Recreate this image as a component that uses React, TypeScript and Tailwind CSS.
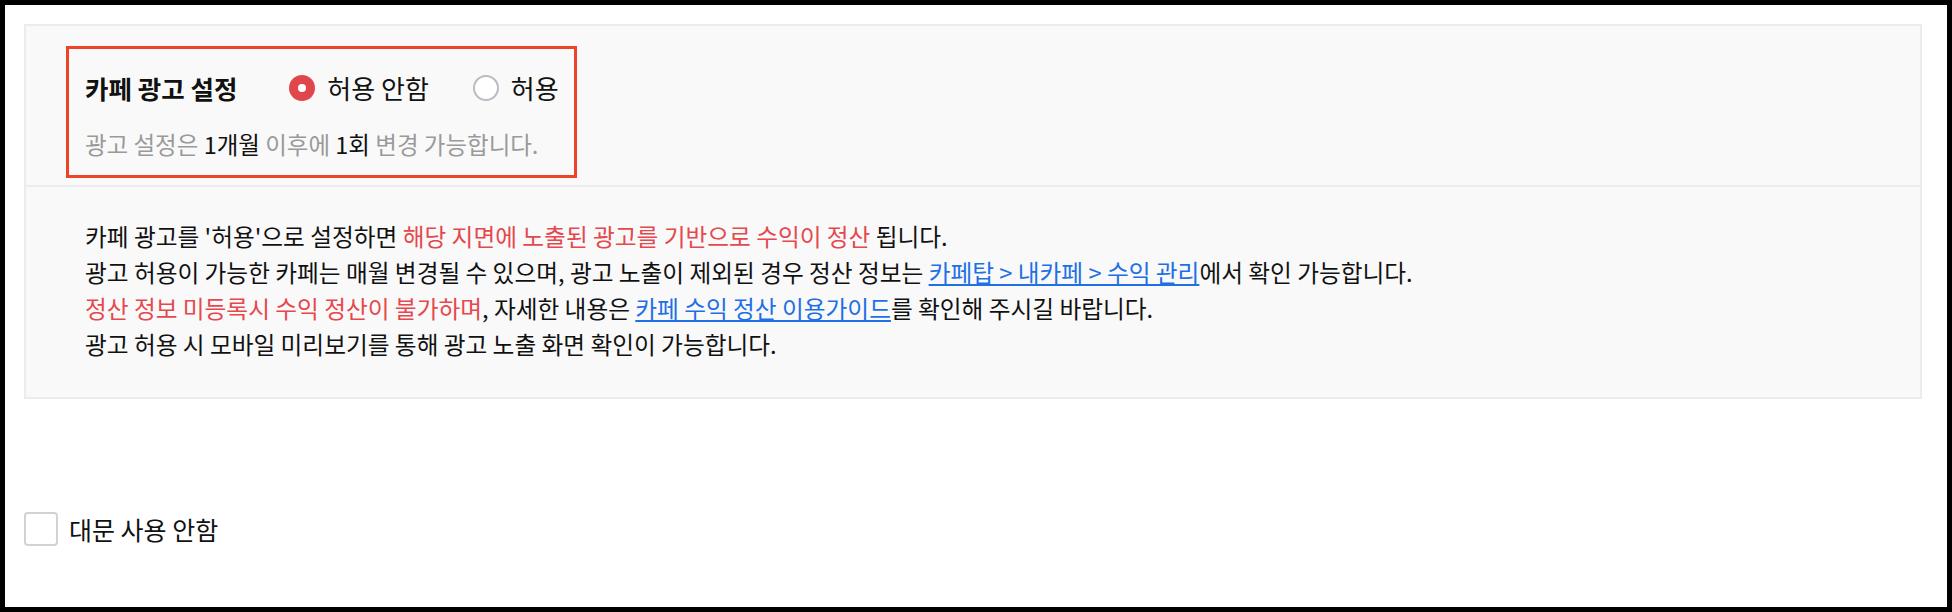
import { useState } from "react";

const font = { fontFamily: '"Noto Sans CJK KR", "Noto Sans", sans-serif' };

function Radio({ checked, label, onClick }: { checked: boolean; label: string; onClick: () => void }) {
  return (
    <button type="button" onClick={onClick} className="flex items-center gap-3">
      {checked ? (
        <span className="flex h-[26px] w-[26px] items-center justify-center rounded-full bg-[#e0474d]">
          <span className="h-[8px] w-[8px] rounded-full bg-white" />
        </span>
      ) : (
        <span className="h-[26px] w-[26px] rounded-full border-2 border-[#b9bcc2] bg-white" />
      )}
      <span className="text-[26px] leading-[34px] text-[#111]">{label}</span>
    </button>
  );
}

export default function App() {
  const [allow, setAllow] = useState(false);
  const [noMain, setNoMain] = useState(false);

  return (
    <div className="h-[612px] border-[5px] border-black bg-white" style={font}>
      <div className="ml-[19px] mt-[19px] w-[1898px] border-2 border-[#ececec] bg-[#f9f9f9]">
        {/* ad setting row */}
        <div className="pl-[40px] pt-[20px] pb-[7px]">
          <div className="inline-flex flex-col border-[3px] border-[#ec4427] pl-[16px] pr-[15px] pt-[22px] pb-[16px]">
            <div className="flex h-[34px] items-center">
              <h3 className="text-[25.5px] font-bold leading-[34px] text-[#111]">카페 광고 설정</h3>
              <div className="ml-[52px] flex items-center gap-[44px]">
                <Radio checked={!allow} label="허용 안함" onClick={() => setAllow(false)} />
                <Radio checked={allow} label="허용" onClick={() => setAllow(true)} />
              </div>
            </div>
            <p className="mt-[24px] text-[23.5px] leading-[30px] text-[#9a9a9a]">
              광고 설정은 <span className="text-[#111]">1개월</span> 이후에{" "}
              <span className="text-[#111]">1회</span> 변경 가능합니다.
            </p>
          </div>
        </div>

        {/* notice */}
        <div className="border-t-2 border-[#ececec] pl-[59px] pt-[31px] pb-[35px] text-[23.7px] leading-[36px] text-[#111]">
          <p>
            카페 광고를 '허용'으로 설정하면{" "}
            <span className="text-[#e5484d]">해당 지면에 노출된 광고를 기반으로 수익이 정산</span> 됩니다.
          </p>
          <p>
            광고 허용이 가능한 카페는 매월 변경될 수 있으며, 광고 노출이 제외된 경우 정산 정보는{" "}
            <a href="#" className="text-[#1f6fe5] underline">
              카페탑 &gt; 내카페 &gt; 수익 관리
            </a>
            에서 확인 가능합니다.
          </p>
          <p>
            <span className="text-[#e5484d]">정산 정보 미등록시 수익 정산이 불가하며</span>, 자세한 내용은{" "}
            <a href="#" className="text-[#1f6fe5] underline">
              카페 수익 정산 이용가이드
            </a>
            를 확인해 주시길 바랍니다.
          </p>
          <p>광고 허용 시 모바일 미리보기를 통해 광고 노출 화면 확인이 가능합니다.</p>
        </div>
      </div>

      <label className="ml-[19px] mt-[113px] flex w-fit cursor-pointer items-center gap-[11px]">
        <input
          type="checkbox"
          checked={noMain}
          onChange={(e) => setNoMain(e.target.checked)}
          className="sr-only"
        />
        <span
          className={`h-[34px] w-[34px] rounded-[4px] border-2 ${
            noMain ? "border-[#e0474d] bg-[#e0474d]" : "border-[#d0d2d6] bg-white"
          }`}
        />
        <span className="text-[25px] leading-[34px] text-[#111]">대문 사용 안함</span>
      </label>
    </div>
  );
}
